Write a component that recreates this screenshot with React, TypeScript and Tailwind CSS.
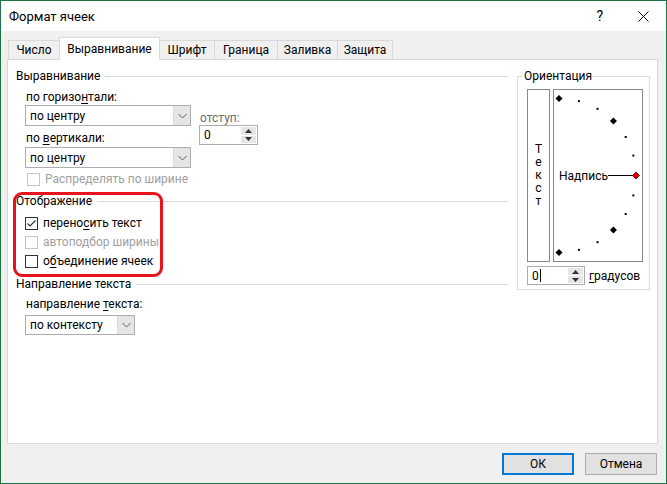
import React from 'react'

// Окно «Формат ячеек» из Excel, вкладка «Выравнивание»

function GroupHeader({ title, className = '' }: { title: string; className?: string }) {
  return (
    <div className={`flex h-[16px] items-center ${className}`}>
      <span className="leading-[16px]">{title}</span>
      <div className="ml-[5px] h-px flex-1 bg-[#dcdcdc]" />
    </div>
  )
}

function Chevron() {
  return (
    <svg width="9" height="6" viewBox="0 0 9 6">
      <path d="M0.5 1 L4.5 5 L8.5 1" fill="none" stroke="#606060" strokeWidth="1" />
    </svg>
  )
}

function Select({ value, width, height = 21 }: { value: string; width: number; height?: number }) {
  return (
    <div className="flex border border-[#adadad] bg-white" style={{ width, height }}>
      <div className="flex flex-1 items-center pl-[4px] leading-none">{value}</div>
      <div className="flex w-[17px] items-center justify-center border-l border-[#dadada] bg-[#e5e5e5]">
        <Chevron />
      </div>
    </div>
  )
}

function Spin({ value, width, height, cursor = false }: { value: string; width: number; height: number; cursor?: boolean }) {
  return (
    <div className="flex border border-[#adadad] bg-white" style={{ width, height }}>
      <div className="flex flex-1 items-center pl-[4px] leading-none">
        {value}
        {cursor && <span className="ml-px h-[13px] w-px bg-black" />}
      </div>
      <div className="my-px mr-px flex w-[15px] flex-col gap-px">
        <div className="flex flex-1 items-center justify-center bg-[#e5e5e5]">
          <svg width="7" height="4" viewBox="0 0 7 4">
            <path d="M0 4 L3.5 0 L7 4 Z" fill="#333" />
          </svg>
        </div>
        <div className="flex flex-1 items-center justify-center bg-[#e5e5e5]">
          <svg width="7" height="4" viewBox="0 0 7 4">
            <path d="M0 0 L3.5 4 L7 0 Z" fill="#333" />
          </svg>
        </div>
      </div>
    </div>
  )
}

function Checkbox({ checked = false, disabled = false, children }: { checked?: boolean; disabled?: boolean; children: React.ReactNode }) {
  return (
    <div className="flex h-[16px] items-center">
      <div
        className={`flex h-[13px] w-[13px] items-center justify-center border bg-white ${disabled ? 'border-[#c4c4c4]' : 'border-[#333333]'}`}
      >
        {checked && (
          <svg width="11" height="11" viewBox="0 0 11 11">
            <path d="M1.5 5.5 L4 8 L9.5 2.5" fill="none" stroke="#333" strokeWidth="1.2" />
          </svg>
        )}
      </div>
      <span className={`ml-[5px] leading-[16px] ${disabled ? 'text-[#a0a0a0]' : 'text-black'}`}>{children}</span>
    </div>
  )
}

function Dial() {
  const cx = 5
  const cy = 85.5
  const r = 77
  const marks = []
  for (let a = -90; a <= 90; a += 15) {
    const rad = (a * Math.PI) / 180
    const x = cx + r * Math.cos(rad)
    const y = cy + r * Math.sin(rad)
    if (a === 0) {
      marks.push(
        <path key={a} d={`M${x - 3.5} ${y} L${x} ${y - 3.5} L${x + 3.5} ${y} L${x} ${y + 3.5} Z`} fill="#e00000" stroke="#400000" strokeWidth="0.8" />
      )
    } else if (a % 45 === 0) {
      marks.push(
        <path key={a} d={`M${x - 3.5} ${y} L${x} ${y - 3.5} L${x + 3.5} ${y} L${x} ${y + 3.5} Z`} fill="#000" />
      )
    } else {
      marks.push(<rect key={a} x={x - 1} y={y - 1} width="2" height="2" fill="#000" />)
    }
  }
  return (
    <svg width="88" height="171" viewBox="0 0 88 171">
      <text x="5" y="89.5" fontSize="12" fontFamily="Roboto, sans-serif" fill="#000">
        Надпись
      </text>
      <line x1="54" y1="85.5" x2="79" y2="85.5" stroke="#000" strokeWidth="1" />
      {marks}
    </svg>
  )
}

export default function App() {
  const tabs = [
    { label: 'Число', w: 52 },
    { label: 'Выравнивание', w: 101, active: true },
    { label: 'Шрифт', w: 56 },
    { label: 'Граница', w: 64 },
    { label: 'Заливка', w: 61 },
    { label: 'Защита', w: 56 },
  ]

  return (
    <div className="flex h-[484px] w-[667px] flex-col border border-[#1f7244] bg-[#f0f0f0] font-['Roboto',sans-serif] text-[12px] text-black">
      {/* заголовок окна */}
      <div className="flex h-[30px] shrink-0 items-center bg-white pl-[8px]">
        <span className="text-[13px] leading-none">Формат ячеек</span>
        <span className="ml-auto text-[14px] leading-none">?</span>
        <svg className="ml-[35px] mr-[17px]" width="11" height="11" viewBox="0 0 11 11">
          <path d="M0.5 0.5 L10.5 10.5 M10.5 0.5 L0.5 10.5" stroke="#000" strokeWidth="1" />
        </svg>
      </div>

      {/* вкладки */}
      <div className="mt-[6px] flex h-[22px] shrink-0 items-end pl-[7px]">
        {tabs.map((t, i) =>
          t.active ? (
            <div
              key={t.label}
              className="relative z-10 -mb-px -ml-px flex h-[23px] items-center justify-center border border-b-0 border-[#d9d9d9] bg-white pb-[1px]"
              style={{ width: t.w }}
            >
              {t.label}
            </div>
          ) : (
            <div
              key={t.label}
              className={`flex h-[19px] items-center justify-center border border-b-0 border-[#d9d9d9] bg-[#f0f0f0] ${i > 0 ? '-ml-px' : ''}`}
              style={{ width: t.w }}
            >
              {t.label}
            </div>
          )
        )}
      </div>

      {/* панель вкладки */}
      <div className="ml-[6px] flex h-[385px] w-[651px] shrink-0 border border-[#d9d9d9] bg-white">
        {/* левая колонка */}
        <div className="relative flex w-[500px] flex-col pl-[8px]">
          <GroupHeader title="Выравнивание" className="mt-[8px]" />
          <div className="pl-[9px]">
            <div className="mt-[5px] h-[16px] pl-px leading-[16px]">
              по горизо<u className="underline-offset-2">н</u>тали:
            </div>
            <div className="flex">
              <div className="flex w-[166px] flex-col">
                <Select value="по центру" width={166} />
                <div className="mt-[4px] h-[16px] pl-px leading-[16px]">
                  по <u className="underline-offset-2">в</u>ертикали:
                </div>
                <div className="mt-px">
                  <Select value="по центру" width={166} />
                </div>
              </div>
              <div className="ml-[8px] flex flex-col">
                <div className="mt-[5px] h-[16px] pl-px leading-[16px] text-[#6d6d6d]">отступ:</div>
                <div className="-mt-px">
                  <Spin value="0" width={59} height={20} />
                </div>
              </div>
            </div>
            <div className="mt-[3px] pl-[2px]">
              <Checkbox disabled>Распределять по ширине</Checkbox>
            </div>
          </div>

          <GroupHeader title="Отображение" className="mt-[6px]" />
          <div className="mt-[6px] flex flex-col gap-[3px] pl-[9px]">
            <Checkbox checked>
              перено<u className="underline-offset-2">с</u>ить текст
            </Checkbox>
            <Checkbox disabled>автоподбор ширины</Checkbox>
            <Checkbox>
              о<u className="underline-offset-2">б</u>ъединение ячеек
            </Checkbox>
          </div>

          <GroupHeader title="Направление текста" className="mt-[7px]" />
          <div className="pl-[9px]">
            <div className="mt-[4px] h-[16px] pl-px leading-[16px]">
              направление <u className="underline-offset-2">т</u>екста:
            </div>
            <div className="mt-[3px]">
              <Select value="по контексту" width={110} height={20} />
            </div>
          </div>

          {/* красная рамка-выделение */}
          <div className="pointer-events-none absolute left-[5px] top-[132px] h-[85px] w-[150px] rounded-[9px] border-[3px] border-[#e8141d]" />
        </div>

        {/* Ориентация */}
        <div className="ml-[9px] mt-[16px] flex h-[214px] w-[133px] flex-col border border-[#dcdcdc] pl-[9px]">
          <span className="-ml-[4px] -mt-[9px] h-[16px] w-fit bg-white px-px leading-[16px]">Ориентация</span>
          <div className="mt-[5px] flex">
            <div className="flex h-[173px] w-[23px] flex-col items-center justify-center border border-[#888888]">
              {['Т', 'е', 'к', 'с', 'т'].map((ch, i) => (
                <div key={i} className="h-[13px] overflow-visible text-[12px] leading-[13px]">
                  {ch}
                </div>
              ))}
            </div>
            <div className="ml-[3px] h-[173px] w-[90px] border border-[#888888]">
              <Dial />
            </div>
          </div>
          <div className="mt-[4px] flex items-center">
            <Spin value="0" width={58} height={19} cursor />
            <span className="ml-[4px] leading-[16px]">
              <u className="underline-offset-2">г</u>радусов
            </span>
          </div>
        </div>
      </div>

      {/* кнопки */}
      <div className="mt-[9px] flex justify-end gap-[11px] pr-[9px]">
        <button className="h-[22px] w-[72px] border-2 border-[#0078d7] bg-[#e1e1e1] leading-none">ОК</button>
        <button className="h-[22px] w-[72px] border border-[#adadad] bg-[#e1e1e1] leading-none">Отмена</button>
      </div>
    </div>
  )
}
